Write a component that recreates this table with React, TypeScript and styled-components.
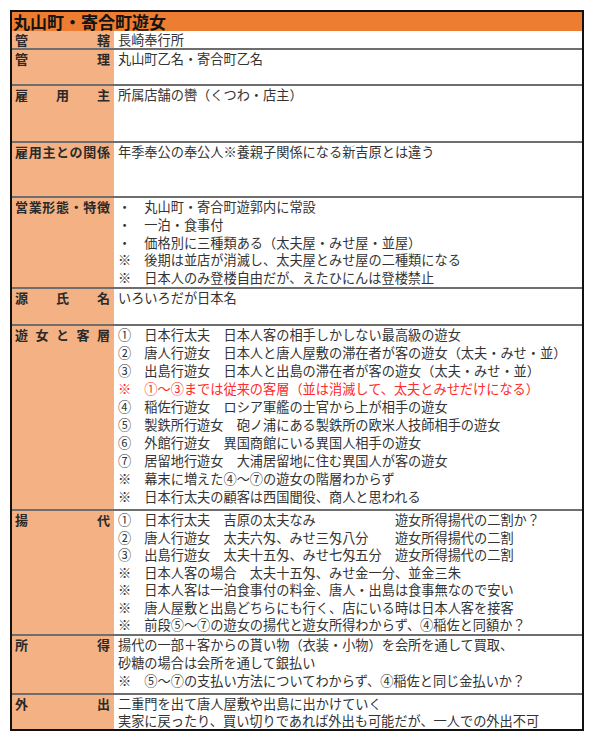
import styled, { createGlobalStyle } from "styled-components";

const GlobalStyle = createGlobalStyle`
  html, body {
    margin: 0;
    padding: 0;
    background: #fff;
  }
  body {
    font-family: "Noto Sans CJK JP", "Noto Sans", sans-serif;
  }
`;

interface Entry {
  label: string;
  height: number;
  lines: { text: string; red?: boolean }[];
}

const entries: Entry[] = [
  { label: "管轄", height: 17, lines: [{ text: "長崎奉行所" }] },
  { label: "管理", height: 36, lines: [{ text: "丸山町乙名・寄合町乙名" }] },
  { label: "雇用主", height: 57, lines: [{ text: "所属店舗の轡（くつわ・店主）" }] },
  {
    label: "雇用主との関係",
    height: 55,
    lines: [{ text: "年季奉公の奉公人※養親子関係になる新吉原とは違う" }],
  },
  {
    label: "営業形態・特徴",
    height: 91,
    lines: [
      { text: "・　丸山町・寄合町遊郭内に常設" },
      { text: "・　一泊・食事付" },
      { text: "・　価格別に三種類ある（太夫屋・みせ屋・並屋）" },
      { text: "※　後期は並店が消滅し、太夫屋とみせ屋の二種類になる" },
      { text: "※　日本人のみ登楼自由だが、えたひにんは登楼禁止" },
    ],
  },
  { label: "源氏名", height: 37, lines: [{ text: "いろいろだが日本名" }] },
  {
    label: "遊女と客層",
    height: 185,
    lines: [
      { text: "①　日本行太夫　日本人客の相手しかしない最高級の遊女" },
      { text: "②　唐人行遊女　日本人と唐人屋敷の滞在者が客の遊女（太夫・みせ・並）" },
      { text: "③　出島行遊女　日本人と出島の滞在者が客の遊女（太夫・みせ・並）" },
      { text: "※　①～③までは従来の客層（並は消滅して、太夫とみせだけになる）", red: true },
      { text: "④　稲佐行遊女　ロシア軍艦の士官から上が相手の遊女" },
      { text: "⑤　製鉄所行遊女　砲ノ浦にある製鉄所の欧米人技師相手の遊女" },
      { text: "⑥　外館行遊女　異国商館にいる異国人相手の遊女" },
      { text: "⑦　居留地行遊女　大浦居留地に住む異国人が客の遊女" },
      { text: "※　幕末に増えた④～⑦の遊女の階層わからず" },
      { text: "※　日本行太夫の顧客は西国聞役、商人と思われる" },
    ],
  },
  {
    label: "揚代",
    height: 125,
    lines: [
      { text: "①　日本行太夫　吉原の太夫なみ　　　　　　遊女所得揚代の二割か？" },
      { text: "②　唐人行遊女　太夫六匁、みせ三匁八分　　遊女所得揚代の二割" },
      { text: "③　出島行遊女　太夫十五匁、みせ七匁五分　遊女所得揚代の二割" },
      { text: "※　日本人客の場合　太夫十五匁、みせ金一分、並金三朱" },
      { text: "※　日本人客は一泊食事付の料金、唐人・出島は食事無なので安い" },
      { text: "※　唐人屋敷と出島どちらにも行く、店にいる時は日本人客を接客" },
      { text: "※　前段⑤～⑦の遊女の揚代と遊女所得わからず、④稲佐と同額か？" },
    ],
  },
  {
    label: "所得",
    height: 59,
    lines: [
      { text: "揚代の一部＋客からの貰い物（衣装・小物）を会所を通して買取、" },
      { text: "砂糖の場合は会所を通して銀払い" },
      { text: "※　⑤～⑦の支払い方法についてわからず、④稲佐と同じ金払いか？" },
    ],
  },
  {
    label: "外出",
    height: 36,
    lines: [
      { text: "二重門を出て唐人屋敷や出島に出かけていく" },
      { text: "実家に戻ったり、買い切りであれば外出も可能だが、一人での外出不可" },
    ],
  },
];

const LINE = 18;

const Sheet = styled.div`
  width: 574px;
  margin: 10px 0 0 10px;
  border: 2px solid #111;
  box-sizing: border-box;
  background: #fff;
`;

const TitleBar = styled.div`
  height: 19px;
  background: #ed7d31;
  color: #141414;
  font-size: 17px;
  font-weight: 700;
  line-height: 19px;
  padding-left: 1px;
  white-space: nowrap;
`;

const Row = styled.div<{ $h: number; $first?: boolean }>`
  display: grid;
  grid-template-columns: 102px 1fr;
  height: ${({ $h }) => $h}px;
  box-sizing: border-box;
  border-top: ${({ $first }) => ($first ? "none" : "2px solid #6e6e6e")};
`;

const Label = styled.div<{ $lh: number }>`
  background: #f4b183;
  color: #2a2a2a;
  font-size: 13px;
  font-weight: 700;
  line-height: ${({ $lh }) => $lh}px;
  padding: 0 4px 0 3px;
  text-align: justify;
  text-align-last: justify;
  white-space: nowrap;
`;

const Content = styled.div<{ $lh: number }>`
  padding: 0 0 0 4px;
  font-size: 13.2px;
  line-height: ${({ $lh }) => $lh}px;
  color: #333;
`;

const Line = styled.div<{ $red?: boolean }>`
  white-space: nowrap;
  color: ${({ $red }) => ($red ? "#ff2a2a" : "inherit")};
`;

export default function App() {
  return (
    <>
      <GlobalStyle />
      <Sheet>
        <TitleBar>丸山町・寄合町遊女</TitleBar>
        {entries.map((entry, i) => {
          const room = entry.height - (i === 0 ? 0 : 2);
          const lh = Math.min(LINE, Math.floor((room / entry.lines.length) * 10) / 10);
          return (
            <Row key={entry.label} $h={entry.height} $first={i === 0}>
              <Label $lh={lh}>{entry.label}</Label>
              <Content $lh={lh}>
                {entry.lines.map((line, j) => (
                  <Line key={j} $red={line.red}>
                    {line.text}
                  </Line>
                ))}
              </Content>
            </Row>
          );
        })}
      </Sheet>
    </>
  );
}
